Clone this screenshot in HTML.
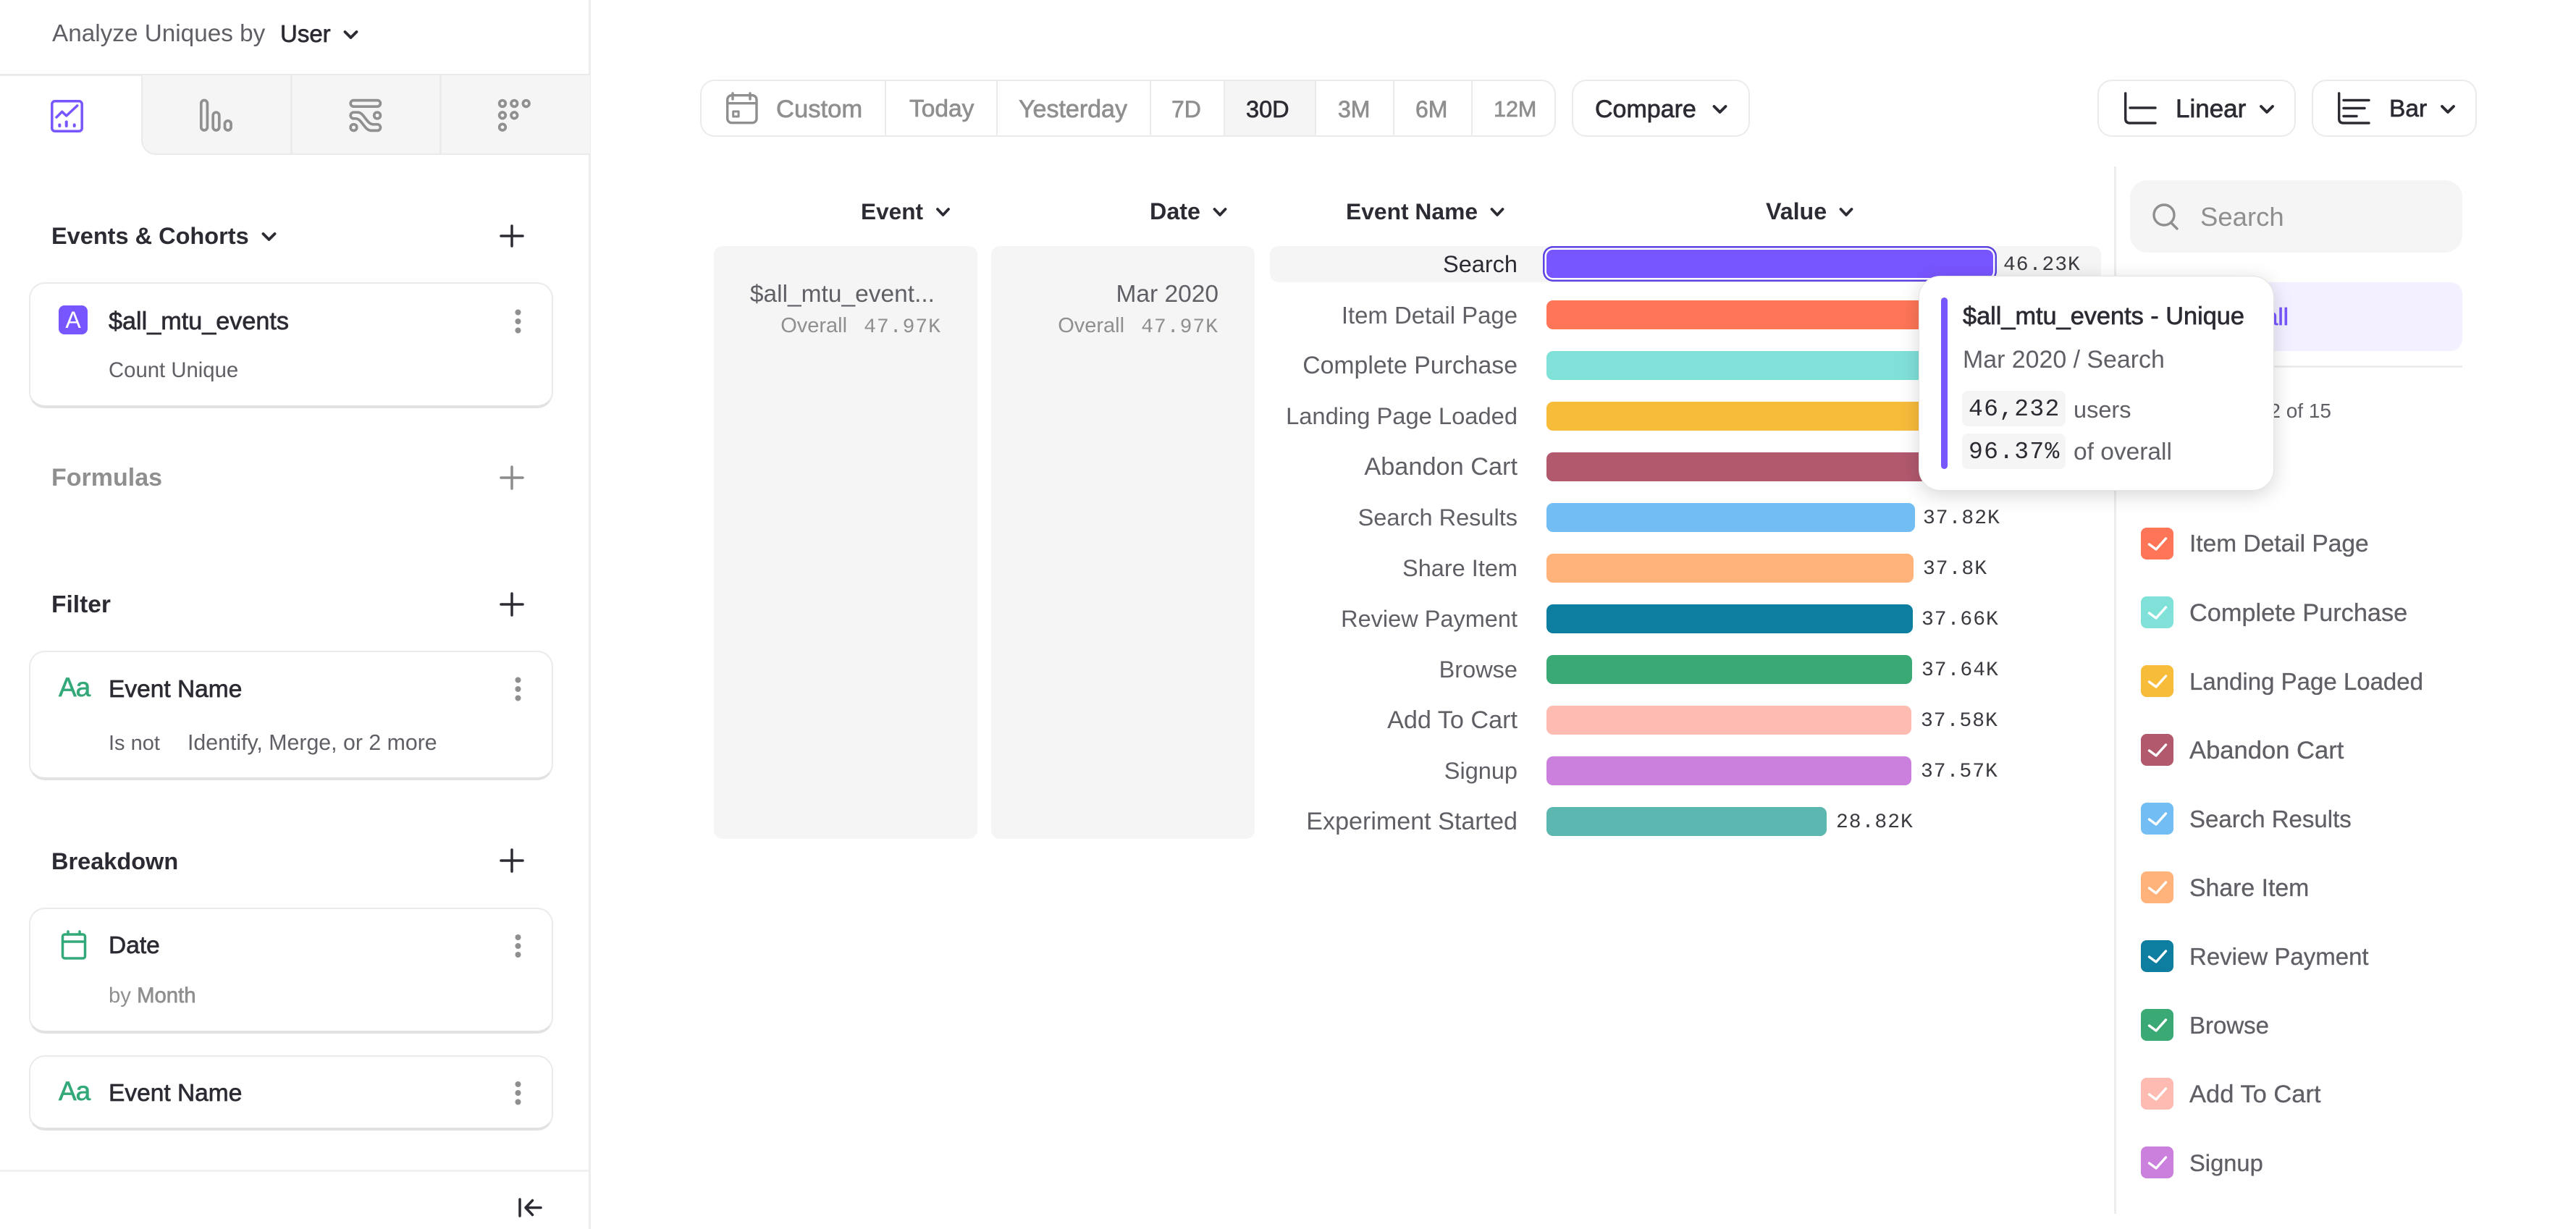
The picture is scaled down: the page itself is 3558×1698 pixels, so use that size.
<!DOCTYPE html>
<html><head><meta charset="utf-8"><title>Insights</title>
<style>
*{box-sizing:border-box}
html,body{margin:0;padding:0;background:#fff}
body{position:relative;width:3558px;height:1698px;overflow:hidden;font-family:"Liberation Sans",sans-serif;color:#2b2b33;font-size:32px}
.t{position:absolute;white-space:nowrap;line-height:40px;height:40px}
.m{-webkit-text-stroke:.7px currentColor}
.h{font-weight:bold}
.g{color:#5f5f66}
.l{color:#8f8f8f}
.mono{font-family:"Liberation Mono",monospace;letter-spacing:1px;font-size:28px;color:#3a3a40}
.box{position:absolute}
.card{position:absolute;left:40px;width:724px;background:#fff;border:2.5px solid #ebebeb;border-bottom:4px solid #e2e2e2;border-radius:22px}
.bar{position:absolute;left:2136px;height:40px;border-radius:9px}
.lab{text-align:right;right:1462px}
.cb{position:absolute;left:2957px;width:45px;height:44px;border-radius:8px}
.lg{left:3024px;color:#5f5f66;-webkit-text-stroke:.3px currentColor}
svg{position:absolute;left:0;top:0}
</style></head><body>

<!-- left sidebar -->
<div class="box" style="left:813px;top:0;width:3px;height:1698px;background:#ededed"></div>
<div class="box" style="left:0;top:102px;width:815px;height:2.5px;background:#ebebeb"></div>
<div class="box" style="left:195px;top:104px;width:620px;height:110px;background:#f5f5f5;border-left:2.5px solid #ebebeb;border-bottom:2.5px solid #ebebeb;border-bottom-left-radius:20px"></div>
<div class="box" style="left:401px;top:104px;width:2.5px;height:109px;background:#ebebeb"></div>
<div class="box" style="left:607px;top:104px;width:2.5px;height:109px;background:#ebebeb"></div>
<div class="t g" style="left:72px;top:27px;font-size:33.3px">Analyze Uniques by</div>
<div class="t m" style="left:387px;top:27px;font-size:33px">User</div>

<div class="t h" style="left:71px;top:306px;font-size:32.5px">Events &amp; Cohorts</div>
<div class="card" style="top:390px;height:174px"></div>
<div class="box" style="left:81px;top:422px;width:40px;height:40px;border-radius:8px;background:#7856ff;color:#fff;font-size:32px;line-height:40px;text-align:center">A</div>
<div class="t m" style="left:150px;top:424px;font-size:34.2px">$all_mtu_events</div>
<div class="t g" style="left:150px;top:492px;font-size:29.3px">Count Unique</div>

<div class="t h l" style="left:71px;top:640px;font-size:34px">Formulas</div>
<div class="t h" style="left:71px;top:816px;font-size:33.5px">Filter</div>
<div class="card" style="top:899px;height:179px"></div>
<div class="t m" style="left:81px;top:930px;font-size:37px;color:#33a878;letter-spacing:-1px">Aa</div>
<div class="t m" style="left:150px;top:933px;font-size:33.5px">Event Name</div>
<div class="t g" style="left:150px;top:1007px;font-size:29px">Is not</div>
<div class="t g" style="left:259px;top:1007px;font-size:30.3px">Identify, Merge, or 2 more</div>

<div class="t h" style="left:71px;top:1170px;font-size:32.5px">Breakdown</div>
<div class="card" style="top:1254px;height:174px"></div>
<div class="t m" style="left:150px;top:1287px;font-size:33.5px">Date</div>
<div class="t l" style="left:150px;top:1356px;font-size:29.3px">by <span class="m">Month</span></div>
<div class="card" style="top:1458px;height:104px"></div>
<div class="t m" style="left:81px;top:1488px;font-size:37px;color:#33a878;letter-spacing:-1px">Aa</div>
<div class="t m" style="left:150px;top:1491px;font-size:33.5px">Event Name</div>
<div class="box" style="left:0;top:1616px;width:813px;height:2.5px;background:#f0f0f0"></div>

<!-- toolbar -->
<div class="box" style="left:967px;top:110px;width:1182px;height:79px;border:2.5px solid #ebebeb;border-radius:20px"></div>
<div class="box" style="left:1690px;top:112px;width:126px;height:75px;background:#f5f5f5"></div>
<div class="box" style="left:1222px;top:112px;width:2px;height:75px;background:#ebebeb"></div>
<div class="box" style="left:1376px;top:112px;width:2px;height:75px;background:#ebebeb"></div>
<div class="box" style="left:1588px;top:112px;width:2px;height:75px;background:#ebebeb"></div>
<div class="box" style="left:1690px;top:112px;width:2px;height:75px;background:#ebebeb"></div>
<div class="box" style="left:1816px;top:112px;width:2px;height:75px;background:#ebebeb"></div>
<div class="box" style="left:1924px;top:112px;width:2px;height:75px;background:#ebebeb"></div>
<div class="box" style="left:2032px;top:112px;width:2px;height:75px;background:#ebebeb"></div>
<div class="t m l" style="left:1072px;top:131px;font-size:34.6px">Custom</div>
<div class="t m l" style="left:1256px;top:131px;font-size:33.5px">Today</div>
<div class="t m l" style="left:1407px;top:131px;font-size:34px">Yesterday</div>
<div class="t m l" style="left:1618px;top:131px;font-size:32px">7D</div>
<div class="t m" style="left:1721px;top:131px;font-size:32.5px">30D</div>
<div class="t m l" style="left:1848px;top:131px;font-size:32px">3M</div>
<div class="t m l" style="left:1955px;top:131px;font-size:32px">6M</div>
<div class="t m l" style="left:2063px;top:131px;font-size:30.5px">12M</div>
<div class="box" style="left:2171px;top:110px;width:246px;height:79px;border:2.5px solid #ebebeb;border-radius:20px"></div>
<div class="t m" style="left:2203px;top:131px;font-size:34px">Compare</div>
<div class="box" style="left:2897px;top:110px;width:274px;height:79px;border:2.5px solid #ebebeb;border-radius:20px"></div>
<div class="t m" style="left:3005px;top:131px;font-size:35px">Linear</div>
<div class="box" style="left:3193px;top:110px;width:228px;height:79px;border:2.5px solid #ebebeb;border-radius:20px"></div>
<div class="t m" style="left:3300px;top:131px;font-size:33.5px">Bar</div>

<!-- table -->
<div class="t h" style="left:1189px;top:272px;font-size:31.6px">Event</div>
<div class="t h" style="left:1588px;top:272px;font-size:32.3px">Date</div>
<div class="t h" style="left:1859px;top:272px;font-size:31.8px">Event Name</div>
<div class="t h" style="left:2439px;top:272px;font-size:32.2px">Value</div>

<div class="box" style="left:986px;top:340px;width:364px;height:819px;background:#f5f5f5;border-radius:12px"></div>
<div class="box" style="left:1369px;top:340px;width:364px;height:819px;background:#f5f5f5;border-radius:12px"></div>
<div class="t g" style="right:2267px;top:387px;font-size:33.5px">$all_mtu_event...</div>
<div class="t l" style="right:2258px;top:430px;font-size:29px">Overall&nbsp;&nbsp;<span style="font-family:'Liberation Mono',monospace;font-size:28px;letter-spacing:1px;margin-left:7px">47.97K</span></div>
<div class="t g" style="right:1875px;top:387px;font-size:33.5px">Mar 2020</div>
<div class="t l" style="right:1875px;top:430px;font-size:29px">Overall&nbsp;&nbsp;<span style="font-family:'Liberation Mono',monospace;font-size:28px;letter-spacing:1px;margin-left:7px">47.97K</span></div>

<div class="box" style="left:1754px;top:340px;width:1148px;height:50px;background:#f5f5f5;border-radius:12px"></div>
<div class="t lab" style="top:345px;font-size:32.5px">Search</div>
<div class="t lab g" style="top:416px;font-size:32.9px">Item Detail Page</div>
<div class="t lab g" style="top:485px;font-size:33.8px">Complete Purchase</div>
<div class="t lab g" style="top:555px;font-size:32.7px">Landing Page Loaded</div>
<div class="t lab g" style="top:625px;font-size:34.3px">Abandon Cart</div>
<div class="t lab g" style="top:695px;font-size:32.5px">Search Results</div>
<div class="t lab g" style="top:765px;font-size:32.5px">Share Item</div>
<div class="t lab g" style="top:835px;font-size:32.5px">Review Payment</div>
<div class="t lab g" style="top:905px;font-size:32.5px">Browse</div>
<div class="t lab g" style="top:975px;font-size:34.2px">Add To Cart</div>
<div class="t lab g" style="top:1045px;font-size:32.5px">Signup</div>
<div class="t lab g" style="top:1115px;font-size:34.1px">Experiment Started</div>

<div class="bar" style="top:345px;width:617px;height:39px;background:#7856ff;box-shadow:0 0 0 2.5px #fff,0 0 0 5px #5a43e0"></div>
<div class="bar" style="top:415px;width:560px;background:#ff7557"></div>
<div class="bar" style="top:485px;width:560px;background:#80e1d9"></div>
<div class="bar" style="top:555px;width:560px;background:#f8bc3b"></div>
<div class="bar" style="top:625px;width:560px;background:#b2596e"></div>
<div class="bar" style="top:695px;width:509px;background:#72bef4"></div>
<div class="bar" style="top:765px;width:507px;background:#ffb27a"></div>
<div class="bar" style="top:835px;width:506px;background:#0d7ea0"></div>
<div class="bar" style="top:905px;width:505px;background:#3ba974"></div>
<div class="bar" style="top:975px;width:504px;background:#febbb2"></div>
<div class="bar" style="top:1045px;width:504px;background:#ca80dc"></div>
<div class="bar" style="top:1115px;width:387px;background:#5bb7af"></div>

<div class="t mono" style="left:2767px;top:347px">46.23K</div>
<div class="t mono" style="left:2656px;top:697px">37.82K</div>
<div class="t mono" style="left:2656px;top:767px">37.8K</div>
<div class="t mono" style="left:2654px;top:837px">37.66K</div>
<div class="t mono" style="left:2654px;top:907px">37.64K</div>
<div class="t mono" style="left:2653px;top:977px">37.58K</div>
<div class="t mono" style="left:2653px;top:1047px">37.57K</div>
<div class="t mono" style="left:2536px;top:1117px">28.82K</div>

<!-- right legend -->
<div class="box" style="left:2920px;top:230px;width:2.5px;height:1447px;background:#ededed"></div>
<div class="box" style="left:2942px;top:249px;width:459px;height:100px;background:#f5f5f5;border-radius:24px"></div>
<div class="t l" style="left:3039px;top:280px;font-size:36.5px">Search</div>
<div class="box" style="left:2942px;top:390px;width:459px;height:95px;background:#f3f1ff;border-radius:16px"></div>
<div class="t m" style="right:397px;top:418px;font-size:33px;color:#7856ff">Select all</div>
<div class="box" style="left:2942px;top:505px;width:459px;height:2.5px;background:#ededed"></div>
<div class="t g" style="right:338px;top:548px;font-size:28px">Showing 12 of 15</div>

<div class="cb" style="top:634px;background:#7856ff"></div>
<div class="t lg" style="top:637px;font-size:33.5px">Search</div>
<div class="cb" style="top:729px;background:#ff7557"></div><div class="t lg" style="top:732px;font-size:33.5px">Item Detail Page</div>
<div class="cb" style="top:824px;background:#80e1d9"></div><div class="t lg" style="top:827px;font-size:34.3px">Complete Purchase</div>
<div class="cb" style="top:919px;background:#f8bc3b"></div><div class="t lg" style="top:922px;font-size:33px">Landing Page Loaded</div>
<div class="cb" style="top:1014px;background:#b2596e"></div><div class="t lg" style="top:1017px;font-size:34.6px">Abandon Cart</div>
<div class="cb" style="top:1109px;background:#72bef4"></div><div class="t lg" style="top:1112px;font-size:33px">Search Results</div>
<div class="cb" style="top:1204px;background:#ffb27a"></div><div class="t lg" style="top:1207px;font-size:33.8px">Share Item</div>
<div class="cb" style="top:1299px;background:#0d7ea0"></div><div class="t lg" style="top:1302px;font-size:33px">Review Payment</div>
<div class="cb" style="top:1394px;background:#3ba974"></div><div class="t lg" style="top:1397px;font-size:33px">Browse</div>
<div class="cb" style="top:1489px;background:#febbb2"></div><div class="t lg" style="top:1492px;font-size:34.5px">Add To Cart</div>
<div class="cb" style="top:1584px;background:#ca80dc"></div><div class="t lg" style="top:1587px;font-size:32.7px">Signup</div>

<!-- icons -->
<svg width="3558" height="1698" viewBox="0 0 3558 1698" fill="none" stroke-linecap="round" stroke-linejoin="round">
  <g stroke="#7856ff" stroke-width="3.5">
    <rect x="71.8" y="139.8" width="41.4" height="41.4" rx="4"/>
    <path d="M78 162 L85.7 154.3 L91.7 160 L106.7 146"/>
    <path d="M82.3 172.5V174M91.7 168.5V174M102.7 172.5V174" stroke-width="4"/>
  </g>
  <g stroke="#909090" stroke-width="3.7">
    <rect x="277.8" y="138.5" width="8.6" height="41.4" rx="4.3"/>
    <rect x="294.2" y="155.2" width="8.6" height="24.7" rx="4.3"/>
    <rect x="310.5" y="166.8" width="8.6" height="13.1" rx="4.3"/>
    <rect x="484.2" y="138.6" width="41.2" height="8.6" rx="4.3"/>
    <rect x="516.8" y="155.2" width="8.6" height="8.6" rx="4"/>
    <rect x="484.2" y="171.8" width="8.6" height="8.6" rx="4"/>
    <path d="M488.5 155.2H494C503 155.2 506 171.8 516 171.8H521.2A4.3 4.3 0 0 1 521.2 180.4H513C503 180.4 500 163.8 491 163.8H488.5A4.3 4.3 0 0 1 488.5 155.2Z"/>
    <circle cx="694" cy="143" r="4.3"/><circle cx="710.3" cy="143" r="4.3"/><circle cx="726.7" cy="143" r="4.3"/>
    <circle cx="694" cy="159.3" r="4.3"/><circle cx="710.3" cy="159.3" r="4.3"/>
    <circle cx="694" cy="175.7" r="4.3"/>
  </g>
  <g stroke="#2b2b33" stroke-width="3.8">
    <path d="M476.5 44L484.5 52L492.5 44"/>
    <path d="M363.5 323L371.5 331L379.5 323"/>
    <path d="M692 326H722M707 312V340" stroke-width="3.5"/>
    <path d="M692 835H722M707 820V850" stroke-width="3.5"/>
    <path d="M692 1189H722M707 1174V1204" stroke-width="3.5"/>
    <path d="M718 1657V1680M747 1668.5H727M735.5 1658.5L726 1668.5L735.5 1678.5" stroke-width="3.5"/>
    <path d="M2367.5 147L2375.5 155L2383.5 147"/>
    <path d="M3123 147L3131 155L3139 147"/>
    <path d="M3373 147L3381 155L3389 147"/>
    <path d="M1295 289L1302.5 297L1310 289"/>
    <path d="M1677.5 289L1685 297L1692.5 289"/>
    <path d="M2060.5 289L2068 297L2075.5 289"/>
    <path d="M2542.5 289L2550 297L2557.5 289"/>
    <path d="M2935.7 129V164Q2935.7 170 2941.7 170H2977M2942 149H2977" stroke-width="3.4"/>
    <path d="M3230.7 129V164Q3230.7 170 3236.7 170H3272M3237 138.5H3272M3237 149.5H3266M3237 160.5H3255" stroke-width="3.4"/>
  </g>
  <g stroke="#8c8c8c" stroke-width="3.5">
    <path d="M692 660H722M707 645V675"/>
  </g>
  <g fill="#8f8f8f" stroke="none">
    <circle cx="715.5" cy="431.5" r="4"/><circle cx="715.5" cy="444" r="4"/><circle cx="715.5" cy="456.5" r="4"/>
    <circle cx="715.5" cy="939.5" r="4"/><circle cx="715.5" cy="952" r="4"/><circle cx="715.5" cy="964.5" r="4"/>
    <circle cx="715.5" cy="1295" r="4"/><circle cx="715.5" cy="1307" r="4"/><circle cx="715.5" cy="1319" r="4"/>
    <circle cx="715.5" cy="1498" r="4"/><circle cx="715.5" cy="1510" r="4"/><circle cx="715.5" cy="1522.5" r="4"/>
  </g>
  <g stroke="#33a878" stroke-width="3.5">
    <rect x="86.5" y="1291" width="31" height="33" rx="3"/>
    <path d="M86.5 1301H117.5M94 1287V1291M110 1287V1291"/>
  </g>
  <g stroke="#8f8f8f" stroke-width="3.4">
    <rect x="1004.7" y="131.7" width="40.3" height="38" rx="6"/>
    <path d="M1004.7 142.7H1045M1012 129V137M1036 129V137"/>
    <rect x="1012.7" y="154" width="7.4" height="7" stroke-width="3"/>
    <circle cx="2989" cy="297" r="14"/>
    <path d="M2999 308L3007 316"/>
  </g>
  <g stroke="#fff" stroke-width="3.4" stroke-linecap="round">
    <path d="M2968.5 657L2978 664L2991.5 649"/>
    <path d="M2968.5 752L2978 759L2991.5 744"/>
    <path d="M2968.5 847L2978 854L2991.5 839"/>
    <path d="M2968.5 942L2978 949L2991.5 934"/>
    <path d="M2968.5 1037L2978 1044L2991.5 1029"/>
    <path d="M2968.5 1132L2978 1139L2991.5 1124"/>
    <path d="M2968.5 1227L2978 1234L2991.5 1219"/>
    <path d="M2968.5 1322L2978 1329L2991.5 1314"/>
    <path d="M2968.5 1417L2978 1424L2991.5 1409"/>
    <path d="M2968.5 1512L2978 1519L2991.5 1504"/>
    <path d="M2968.5 1607L2978 1614L2991.5 1599"/>
  </g>
</svg>

<!-- tooltip -->
<div class="box" style="left:2650px;top:381px;width:491px;height:297px;background:#fff;border-radius:30px;border:1px solid #e4e4e4;box-shadow:0 6px 28px rgba(0,0,0,.16)"></div>
<div class="box" style="left:2681px;top:411px;width:9px;height:237px;background:#7856ff;border-radius:5px"></div>
<div class="t m" style="left:2711px;top:417px;font-size:34.3px">$all_mtu_events - Unique</div>
<div class="t g" style="left:2711px;top:477px;font-size:33.9px">Mar 2020 / Search</div>
<div class="box" style="left:2710px;top:540px;width:143px;height:49px;background:#f5f5f5;border-radius:8px"></div>
<div class="box" style="left:2710px;top:599px;width:143px;height:49px;background:#f5f5f5;border-radius:8px"></div>
<div class="t" style="left:2719px;top:546px;font-family:'Liberation Mono',monospace;font-size:33px;letter-spacing:1.3px">46,232</div>
<div class="t" style="left:2719px;top:605px;font-family:'Liberation Mono',monospace;font-size:33px;letter-spacing:1.3px">96.37%</div>
<div class="t g" style="left:2864px;top:546px;font-size:32.5px">users</div>
<div class="t g" style="left:2864px;top:605px;font-size:33.5px">of overall</div>

</body></html>
